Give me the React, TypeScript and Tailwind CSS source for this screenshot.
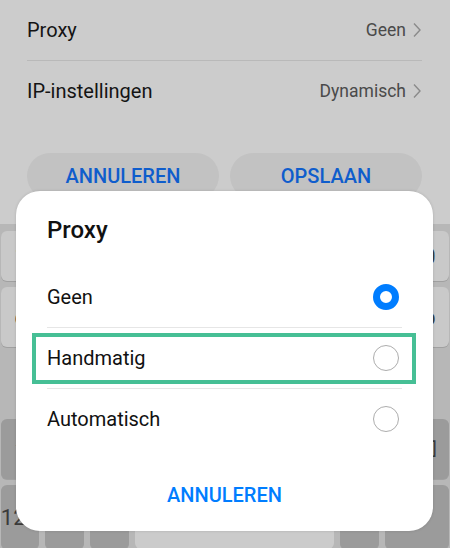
import { FC } from 'react';

const font = { fontFamily: 'Roboto, "Noto Sans", sans-serif' };

const Chevron: FC = () => (
    <svg width="10" height="16" viewBox="0 0 10 16" className="ml-[6px]">
        <polyline points="2,1.5 8,8 2,14.5" fill="none" stroke="#8a8a8a" strokeWidth="1.4" />
    </svg>
);

const SettingRow: FC<{ label: string; value: string }> = ({ label, value }) => (
    <div className="flex items-center justify-between h-[60px]">
        <span className="text-[20px] text-[#141414]">{label}</span>
        <span className="flex items-center text-[17.5px] text-[#4a4a4a]">
            {value}
            <Chevron />
        </span>
    </div>
);

// keys under the dialog carry no label; only the edge keys peek out
const Key: FC<{ label?: string; dark?: boolean; className?: string }> = ({ label, dark, className = 'flex-1' }) => (
    <div
        className={`${className} rounded-[6px] flex items-center justify-center text-[22px] text-[#3a3a3a] ${
            dark ? 'bg-[#9b9b9b]' : 'bg-[#c9c9c9]'
        } shadow-[0_1px_0_#a0a0a0]`}
    >
        {label}
    </div>
);

const Radio: FC<{ checked?: boolean }> = ({ checked }) =>
    checked ? (
        <div className="w-[26px] h-[26px] rounded-full border-[7px] border-[#007dff]" />
    ) : (
        <div className="w-[26px] h-[26px] rounded-full border-[1.5px] border-[#adadad]" />
    );

const Option: FC<{ label: string; checked?: boolean }> = ({ label, checked }) => (
    <div className="flex items-center justify-between h-[60px] pr-[3px]">
        <span className="text-[20px] text-[#111]">{label}</span>
        <Radio checked={checked} />
    </div>
);

const row = (first: string, last: string, n: number) =>
    Array.from({ length: n }, (_, i) => <Key key={i} label={i === 0 ? first : i === n - 1 ? last : undefined} />);

export default function App() {
    return (
        <div className="relative w-[450px] h-[548px] overflow-hidden bg-[#cccccc]" style={font}>
            <div className="px-[27px] pr-[28px]">
                <SettingRow label="Proxy" value="Geen" />
                <div className="h-px bg-[#b9b9b9]" />
                <SettingRow label="IP-instellingen" value="Dynamisch" />
                <div className="flex gap-[11px] mt-[32px]">
                    <button className="flex-1 h-[46px] rounded-full bg-[#c2c2c2] text-[20px] font-medium text-[#0f5dcc]">
                        ANNULEREN
                    </button>
                    <button className="flex-1 h-[46px] rounded-full bg-[#c2c2c2] text-[20px] font-medium text-[#0f5dcc]">
                        OPSLAAN
                    </button>
                </div>
            </div>

            <div className="mt-[25px] bg-[#b7b7b7] px-[1px] pt-[7px] flex flex-col gap-[6px]">
                <div className="flex gap-[6px] h-[50px]">{row('1', '0', 10)}</div>
                <div className="flex gap-[6px] h-[60px]">{row('q', 'p', 10)}</div>
                <div className="flex gap-[6px] h-[60px] px-[23px]">{row('a', 'l', 9)}</div>
                <div className="flex gap-[6px] h-[60px]">
                    <Key dark label="⇧" className="w-[39px]" />
                    {Array.from({ length: 7 }, (_, i) => (
                        <Key key={i} />
                    ))}
                    <Key dark label="⌫" className="w-[56px]" />
                </div>
                <div className="flex gap-[6px] h-[64px]">
                    <Key dark className="w-[38px] text-[15px]" label="12#" />
                    <Key dark className="w-[39px]" />
                    <Key dark className="w-[39px] items-end pb-[14px]" label="," />
                    <div className="w-[199px] rounded-[6px] bg-[#cbcbcb]" />
                    <Key dark className="w-[39px] items-end pb-[14px]" label="." />
                    <Key dark className="flex-1" label="↵" />
                </div>
            </div>

            <div className="absolute left-[16px] top-[191px] w-[417px] h-[340px] rounded-[24px] bg-white shadow-[0_0_3px_rgba(0,0,0,0.15)] px-[31px] pt-[25px]">
                <div className="text-[24px] leading-[28px] font-medium text-[#111]">Proxy</div>
                <div className="mt-[23px]">
                    <Option label="Geen" checked />
                    <div className="h-px bg-[#e6e6e6]" />
                    <Option label="Handmatig" />
                    <div className="h-px bg-[#e6e6e6]" />
                    <Option label="Automatisch" />
                </div>
                <div className="mt-[34px] text-center text-[20px] leading-[24px] font-medium text-[#007dff]">
                    ANNULEREN
                </div>
                <div className="absolute left-[16px] top-[142px] w-[384px] h-[51px] border-[4px] border-[#46bf95]" />
            </div>
        </div>
    );
}
